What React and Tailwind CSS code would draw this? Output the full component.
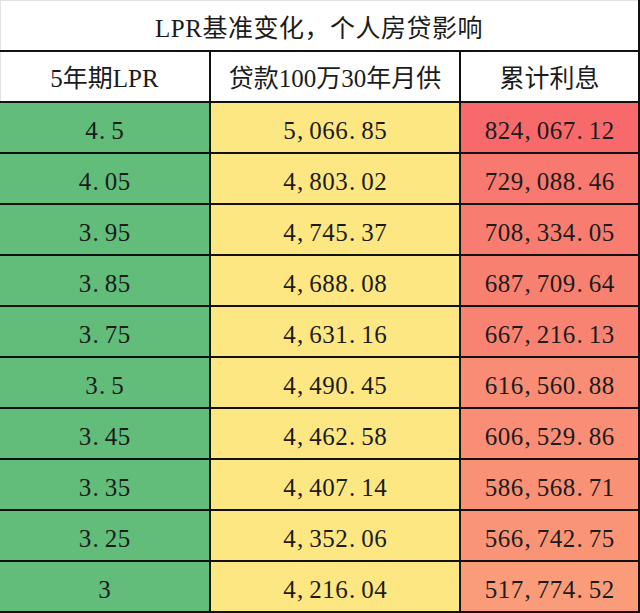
import React from "react";

const rows = [
  ["4.5", "5,066.85", "824,067.12", "#F8696B"],
  ["4.05", "4,803.02", "729,088.46", "#F87970"],
  ["3.95", "4,745.37", "708,334.05", "#F87C70"],
  ["3.85", "4,688.08", "687,709.64", "#F88071"],
  ["3.75", "4,631.16", "667,216.13", "#F98372"],
  ["3.5", "4,490.45", "616,560.88", "#F98C74"],
  ["3.45", "4,462.58", "606,529.86", "#F98D75"],
  ["3.35", "4,407.14", "586,568.71", "#F99176"],
  ["3.25", "4,352.06", "566,742.75", "#F99477"],
  ["3", "4,216.04", "517,774.52", "#FA9C79"],
];

const font = { fontFamily: '"Liberation Serif", "Noto Sans CJK SC", serif' };

function Num({ text }) {
  return (
    <span className="inline-flex">
      {text.split("").map((c, i) =>
        c === "." || c === "," ? (
          <span key={i} className="inline-block w-[13px] text-left pl-[1px]">
            {c}
          </span>
        ) : (
          <span key={i} className="inline-block w-[13px] text-center">
            {c}
          </span>
        )
      )}
    </span>
  );
}

export default function App() {
  return (
    <div
      className="w-[640px] h-[613px] bg-white text-[25px] leading-none text-[#1c1c1c] overflow-hidden"
      style={font}
    >
      <div className="h-[50px] flex items-center justify-center pt-[6px] bg-white border-r-2 border-[#111] shadow-[inset_1px_1px_0_#e2e2e2]">
        <span className="tracking-[0.5px]">LPR基准变化，个人房贷影响</span>
      </div>
      <div className="grid grid-cols-[209px_248px_177px] auto-rows-[49px] gap-[2px] bg-[#111] pt-[2px] pb-[2px] pr-[2px] h-[563px]">
        <div className="bg-white flex items-center justify-center pt-[4px] shadow-[inset_1px_0_0_#e2e2e2]">
          <span>5年期LPR</span>
        </div>
        <div className="bg-white flex items-center justify-center pt-[4px]">
          <span>贷款100万30年月供</span>
        </div>
        <div className="bg-white flex items-center justify-center pt-[4px]">
          <span>累计利息</span>
        </div>
        {rows.map(([a, b, c, col], i) => (
          <React.Fragment key={i}>
            <div className="bg-[#62BD7A] flex items-center justify-center pt-[5px]">
              <Num text={a} />
            </div>
            <div className="bg-[#FDE783] flex items-center justify-center pt-[5px]">
              <Num text={b} />
            </div>
            <div
              className="flex items-center justify-center pt-[5px]"
              style={{ backgroundColor: col }}
            >
              <Num text={c} />
            </div>
          </React.Fragment>
        ))}
      </div>
    </div>
  );
}
